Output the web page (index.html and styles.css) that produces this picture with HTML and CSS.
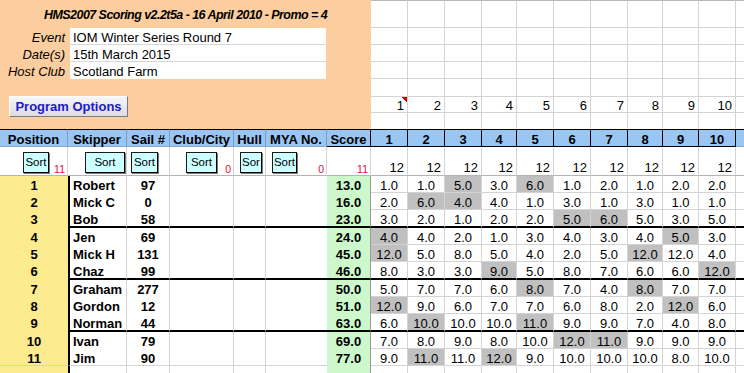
FILE: index.html
```html
<!DOCTYPE html>
<html>
<head>
<meta charset="utf-8">
<link rel="stylesheet" href="styles.css">
</head>
<body>
<div class="sheet">
  <div class="panel">
    <div class="title">HMS2007 Scoring v2.2t5a - 16 April 2010 - Promo = 4</div>
    <div class="form">
      <div class="lbl">Event</div><div class="val">IOM Winter Series Round 7</div>
      <div class="lbl">Date(s)</div><div class="val">15th March 2015</div>
      <div class="lbl">Host Club</div><div class="val last">Scotland Farm</div>
    </div>
    <div class="prog">Program Options</div>
  </div>

  <!-- top right grid rows 1-7 -->
  <div class="c top"></div><div class="c top"></div><div class="c top"></div><div class="c top"></div><div class="c top"></div><div class="c top"></div><div class="c top"></div><div class="c top"></div><div class="c top"></div><div class="c top"></div><div class="c top e"></div>
  <div class="c"></div><div class="c"></div><div class="c"></div><div class="c"></div><div class="c"></div><div class="c"></div><div class="c"></div><div class="c"></div><div class="c"></div><div class="c"></div><div class="c e"></div>
  <div class="c"></div><div class="c"></div><div class="c"></div><div class="c"></div><div class="c"></div><div class="c"></div><div class="c"></div><div class="c"></div><div class="c"></div><div class="c"></div><div class="c e"></div>
  <div class="c"></div><div class="c"></div><div class="c"></div><div class="c"></div><div class="c"></div><div class="c"></div><div class="c"></div><div class="c"></div><div class="c"></div><div class="c"></div><div class="c e"></div>
  <div class="c"></div><div class="c"></div><div class="c"></div><div class="c"></div><div class="c"></div><div class="c"></div><div class="c"></div><div class="c"></div><div class="c"></div><div class="c"></div><div class="c e"></div>
  <div class="c rn cm">1</div><div class="c rn">2</div><div class="c rn">3</div><div class="c rn">4</div><div class="c rn">5</div><div class="c rn">6</div><div class="c rn">7</div><div class="c rn">8</div><div class="c rn">9</div><div class="c rn">10</div><div class="c e"></div>
  <div class="c nb"></div><div class="c nb"></div><div class="c nb"></div><div class="c nb"></div><div class="c nb"></div><div class="c nb"></div><div class="c nb"></div><div class="c nb"></div><div class="c nb"></div><div class="c nb"></div><div class="c nb e"></div>

  <!-- header -->
  <div class="h">Position</div><div class="h">Skipper</div><div class="h">Sail #</div><div class="h">Club/City</div><div class="h">Hull</div><div class="h">MYA No.</div><div class="h hk">Score</div>
  <div class="h hk">1</div><div class="h hk">2</div><div class="h hk">3</div><div class="h hk">4</div><div class="h hk">5</div><div class="h hk">6</div><div class="h hk">7</div><div class="h hk">8</div><div class="h hk">9</div><div class="h hk">10</div><div class="h he"></div>

  <!-- sort row -->
  <div class="s"><span class="btn b1">Sort</span><span class="red">11</span></div>
  <div class="s"><span class="btn b2">Sort</span></div>
  <div class="s"><span class="btn b3">Sort</span></div>
  <div class="s"><span class="btn b4">Sort</span><span class="red">0</span></div>
  <div class="s"><span class="btn b5">Sor</span></div>
  <div class="s"><span class="btn b6">Sort</span><span class="red">0</span></div>
  <div class="s"><span class="red">11</span></div>
  <div class="s"><span class="cnt">12</span></div><div class="s"><span class="cnt">12</span></div><div class="s"><span class="cnt">12</span></div><div class="s"><span class="cnt">12</span></div><div class="s"><span class="cnt">12</span></div><div class="s"><span class="cnt">12</span></div><div class="s"><span class="cnt">12</span></div><div class="s"><span class="cnt">12</span></div><div class="s"><span class="cnt">12</span></div><div class="s"><span class="cnt">12</span></div><div class="s e"></div>

  <!-- row 1 -->
  <div class="p">1</div><div class="k">Robert</div><div class="n">97</div><div class="w"></div><div class="w"></div><div class="w nr"></div><div class="sc">13.0</div>
  <div class="r">1.0</div><div class="r">1.0</div><div class="r x">5.0</div><div class="r">3.0</div><div class="r x">6.0</div><div class="r">1.0</div><div class="r">2.0</div><div class="r">1.0</div><div class="r">2.0</div><div class="r">2.0</div><div class="r e"></div>
  <!-- row 2 -->
  <div class="p">2</div><div class="k">Mick C</div><div class="n">0</div><div class="w"></div><div class="w"></div><div class="w nr"></div><div class="sc">16.0</div>
  <div class="r">2.0</div><div class="r x">6.0</div><div class="r x">4.0</div><div class="r">4.0</div><div class="r">1.0</div><div class="r">3.0</div><div class="r">1.0</div><div class="r">3.0</div><div class="r">1.0</div><div class="r">1.0</div><div class="r e"></div>
  <!-- row 3 -->
  <div class="p">3</div><div class="k t">Bob</div><div class="n t">58</div><div class="w t"></div><div class="w t"></div><div class="w nr t"></div><div class="sc t">23.0</div>
  <div class="r t">3.0</div><div class="r t">2.0</div><div class="r t">1.0</div><div class="r t">2.0</div><div class="r t">2.0</div><div class="r x t">5.0</div><div class="r x t">6.0</div><div class="r t">5.0</div><div class="r t">3.0</div><div class="r t">5.0</div><div class="r e t"></div>
  <!-- row 4 -->
  <div class="p">4</div><div class="k">Jen</div><div class="n">69</div><div class="w"></div><div class="w"></div><div class="w nr"></div><div class="sc">24.0</div>
  <div class="r x">4.0</div><div class="r">4.0</div><div class="r">2.0</div><div class="r">1.0</div><div class="r">3.0</div><div class="r">4.0</div><div class="r">3.0</div><div class="r">4.0</div><div class="r x">5.0</div><div class="r">3.0</div><div class="r e"></div>
  <!-- row 5 -->
  <div class="p">5</div><div class="k">Mick H</div><div class="n">131</div><div class="w"></div><div class="w"></div><div class="w nr"></div><div class="sc">45.0</div>
  <div class="r x">12.0</div><div class="r">5.0</div><div class="r">8.0</div><div class="r">5.0</div><div class="r">4.0</div><div class="r">2.0</div><div class="r">5.0</div><div class="r x">12.0</div><div class="r">12.0</div><div class="r">4.0</div><div class="r e"></div>
  <!-- row 6 -->
  <div class="p">6</div><div class="k t">Chaz</div><div class="n t">99</div><div class="w t"></div><div class="w t"></div><div class="w nr t"></div><div class="sc t">46.0</div>
  <div class="r t">8.0</div><div class="r t">3.0</div><div class="r t">3.0</div><div class="r x t">9.0</div><div class="r t">5.0</div><div class="r t">8.0</div><div class="r t">7.0</div><div class="r t">6.0</div><div class="r t">6.0</div><div class="r x t">12.0</div><div class="r e t"></div>
  <!-- row 7 -->
  <div class="p">7</div><div class="k">Graham</div><div class="n">277</div><div class="w"></div><div class="w"></div><div class="w nr"></div><div class="sc">50.0</div>
  <div class="r">5.0</div><div class="r">7.0</div><div class="r">7.0</div><div class="r">6.0</div><div class="r x">8.0</div><div class="r">7.0</div><div class="r">4.0</div><div class="r x">8.0</div><div class="r">7.0</div><div class="r">7.0</div><div class="r e"></div>
  <!-- row 8 -->
  <div class="p">8</div><div class="k">Gordon</div><div class="n">12</div><div class="w"></div><div class="w"></div><div class="w nr"></div><div class="sc">51.0</div>
  <div class="r x">12.0</div><div class="r">9.0</div><div class="r">6.0</div><div class="r">7.0</div><div class="r">7.0</div><div class="r">6.0</div><div class="r">8.0</div><div class="r">2.0</div><div class="r x">12.0</div><div class="r">6.0</div><div class="r e"></div>
  <!-- row 9 -->
  <div class="p">9</div><div class="k t">Norman</div><div class="n t">44</div><div class="w t"></div><div class="w t"></div><div class="w nr t"></div><div class="sc t">63.0</div>
  <div class="r t">6.0</div><div class="r x t">10.0</div><div class="r t">10.0</div><div class="r t">10.0</div><div class="r x t">11.0</div><div class="r t">9.0</div><div class="r t">9.0</div><div class="r t">7.0</div><div class="r t">4.0</div><div class="r t">8.0</div><div class="r e t"></div>
  <!-- row 10 -->
  <div class="p">10</div><div class="k">Ivan</div><div class="n">79</div><div class="w"></div><div class="w"></div><div class="w nr"></div><div class="sc">69.0</div>
  <div class="r">7.0</div><div class="r">8.0</div><div class="r">9.0</div><div class="r">8.0</div><div class="r">10.0</div><div class="r x">12.0</div><div class="r x">11.0</div><div class="r">9.0</div><div class="r">9.0</div><div class="r">9.0</div><div class="r e"></div>
  <!-- row 11 -->
  <div class="p bb">11</div><div class="k bb">Jim</div><div class="n bb">90</div><div class="w bb"></div><div class="w bb"></div><div class="w nr bb"></div><div class="sc">77.0</div>
  <div class="r">9.0</div><div class="r x">11.0</div><div class="r">11.0</div><div class="r x">12.0</div><div class="r">9.0</div><div class="r">10.0</div><div class="r">10.0</div><div class="r">10.0</div><div class="r">8.0</div><div class="r">10.0</div><div class="r e"></div>
  <!-- row 12 (partial) -->
  <div class="p"></div><div class="k"></div><div class="n"></div><div class="w"></div><div class="w"></div><div class="w nr"></div><div class="sc"></div>
  <div class="r"></div><div class="r"></div><div class="r"></div><div class="r"></div><div class="r"></div><div class="r"></div><div class="r"></div><div class="r"></div><div class="r"></div><div class="r"></div><div class="r e"></div>
</div>
</body>
</html>
```

FILE: styles.css
```css
* { box-sizing: border-box; margin: 0; padding: 0; }
html, body { background: #fff; overflow: hidden; }
body {
  width: 744px;
  height: 373px;
  font-family: "Liberation Sans", Arial, sans-serif;
  font-size: 13px;
  color: #000;
}
.sheet {
  display: grid;
  grid-template-columns: 68px 59px 43px 64px 32px 61px 44px 37px 37px 37px 35px 37px 37px 37px 35px 36px 37px 8px;
  grid-template-rows: 28px 17px 17px 17px 18px 16px 16px 18px 29px 17px 17px 18px 17px 17px 18px 17px 17px 18px 17px 17px 17px;
  width: 744px;
  white-space: nowrap;
}

/* orange header panel */
.panel {
  grid-column: 1 / 8;
  grid-row: 1 / 8;
  background: #fbcd9f;
  display: flex;
  flex-direction: column;
}
.title {
  height: 28px;
  line-height: 28px;
  text-align: center;
  font-size: 12.5px;
  letter-spacing: -0.55px;
  font-weight: bold;
  font-style: italic;
  padding-top: 1px;
}
.form {
  display: grid;
  grid-template-columns: 70px 256px;
  grid-auto-rows: 17px;
}
.lbl {
  font-style: italic;
  text-align: right;
  padding-right: 5px;
  line-height: 17px;
  padding-top: 1px;
}
.val {
  background: #fff;
  border-bottom: 1px solid #d8d8d8;
  padding-left: 3px;
  line-height: 17px;
  padding-top: 1px;
}
.val.last { border-bottom: none; }
.prog {
  margin: 17px 0 0 9px;
  width: 119px;
  height: 21px;
  line-height: 19px;
  text-align: center;
  font-weight: bold;
  color: #1c1cc8;
  background: linear-gradient(#f7f7f9, #dcdce2);
  border: 1px solid;
  border-color: #fdfdfd #7a7a7a #7a7a7a #fdfdfd;
}

/* generic grid cells */
.c {
  border-right: 1px solid #d4d4d4;
  border-bottom: 1px solid #d4d4d4;
}
.c.top { border-top: 1px solid #b8b8b8; }
.c.nb { border-bottom: none; }
.e { border-right: none !important; }
.rn {
  text-align: right;
  padding-right: 3px;
  padding-top: 1px;
  line-height: 16px;
}
.cm {
  background: linear-gradient(to bottom left, #d40000 50%, transparent 50%) no-repeat top right / 6px 5px;
}

/* header row */
.h {
  background: #99c6f2;
  font-weight: bold;
  text-align: center;
  line-height: 19px;
  border-top: 1px solid #000;
  border-right: 1px solid #7f9cc0;
  border-bottom: 1px solid #8aa6c8;
}
.h.hk { border-right-color: #000; border-bottom-color: #000; }
.h.he { border-right: none; }

/* sort row */
.s {
  display: flex;
  align-items: flex-start;
  border-right: 1px solid #d4d4d4;
  border-bottom: 1px solid #b4b4b4;
}
.btn {
  display: block;
  margin-top: 5px;
  height: 21px;
  line-height: 19px;
  font-size: 11.5px;
  text-align: center;
  background: #ccffff;
  border: 1px solid #1a1a1a;
  border-right-color: #000;
  border-bottom-color: #000;
  box-shadow: 1px 1px 0 #7a7a7a;
  overflow: hidden;
}
.b1 { margin-left: 23px; width: 26px; }
.b2 { margin-left: 17px; width: 40px; }
.b3 { margin-left: 4px; width: 27px; }
.b4 { margin-left: 16px; width: 31px; }
.b5 { margin-left: 6px; width: 22px; }
.b6 { margin-left: 6px; width: 25px; }
.red {
  align-self: flex-end;
  margin-left: auto;
  padding-right: 2px;
  font-size: 10.5px;
  line-height: 12px;
  color: #dd1133;
}
.cnt {
  align-self: flex-end;
  margin-left: auto;
  padding-right: 3px;
  line-height: 15px;
}

/* data rows */
.p {
  background: #fdec8f;
  font-weight: bold;
  text-align: center;
  line-height: 19px;
}
.k {
  border-left: 2px solid #000;
  border-right: 1px solid #d4d4d4;
  font-weight: bold;
  padding-left: 3px;
  line-height: 19px;
}
.n {
  border-right: 1px solid #d4d4d4;
  font-weight: bold;
  text-align: center;
  line-height: 19px;
}
.w { border-right: 1px solid #d4d4d4; }
.w.nr { border-right: none; }
.sc {
  background: #ccf8cc;
  font-weight: bold;
  text-align: center;
  line-height: 19px;
  border-right: 1px solid #9a9a9a;
}
.r {
  text-align: center;
  line-height: 19px;
  border-right: 1px solid #d4d4d4;
  border-bottom: 1px solid #d4d4d4;
}
.x { background: #c0c0c0; }
.bb { border-bottom: 1px solid #d4d4d4; }
.t { border-bottom: 2px solid #000; }
```
